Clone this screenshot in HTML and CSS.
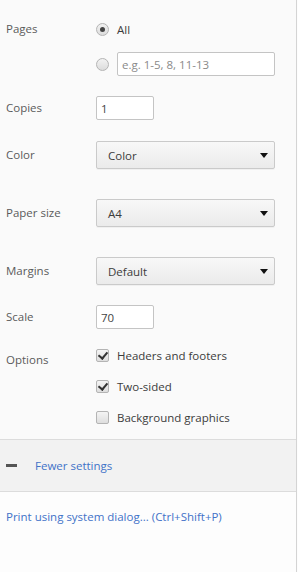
FILE: index.html
```html
<!DOCTYPE html>
<html lang="en">
<head>
  <meta charset="UTF-8">
  <title>Print settings</title>
  <link rel="stylesheet" href="styles.css">
</head>
<body>
  <div class="panel">
    <div class="settings">
      <div class="setting pages">
        <div class="label">Pages</div>
        <div class="controls">
          <label class="choice line"><span class="radio checked"></span>All</label>
          <label class="choice line"><span class="radio"></span><input class="text wide" type="text" placeholder="e.g. 1-5, 8, 11-13"></label>
        </div>
      </div>

      <div class="setting copies">
        <div class="label">Copies</div>
        <div class="controls"><input class="text short" type="text" value="1"></div>
      </div>

      <div class="setting color">
        <div class="label tall">Color</div>
        <div class="controls"><div class="select">Color<span class="arrow"></span></div></div>
      </div>

      <div class="setting paper">
        <div class="label tall">Paper size</div>
        <div class="controls"><div class="select">A4<span class="arrow"></span></div></div>
      </div>

      <div class="setting margins">
        <div class="label tall">Margins</div>
        <div class="controls"><div class="select">Default<span class="arrow"></span></div></div>
      </div>

      <div class="setting scale">
        <div class="label">Scale</div>
        <div class="controls"><input class="text short" type="text" value="70"></div>
      </div>

      <div class="setting options">
        <div class="label opt">Options</div>
        <div class="controls checks">
          <label class="choice check-line"><span class="checkbox checked"></span>Headers and footers</label>
          <label class="choice check-line"><span class="checkbox checked"></span>Two-sided</label>
          <label class="choice check-line"><span class="checkbox"></span>Background graphics</label>
        </div>
      </div>
    </div>

    <div class="more">
      <span class="minus"></span>
      <a class="link" href="#">Fewer settings</a>
    </div>

    <div class="system">
      <a class="link" href="#">Print using system dialog... (Ctrl+Shift+P)</a>
    </div>
  </div>
</body>
</html>
```

FILE: styles.css
```css
* { box-sizing: border-box; }
html, body { margin: 0; height: 100%; }
body { font-family: "Open Sans", "Noto Sans", sans-serif; font-size: 11.5px; color: #444; background: #fdfdfd; }

.panel { width: 297px; min-height: 100%; background: #fdfdfd; border-right: 1px solid #d4d4d4; }
.settings { background: #fafafa; padding: 17px 0 12px 6px; border-bottom: 1px solid #dcdcdc; }

.setting { display: grid; grid-template-columns: 90px 179px; align-items: start; }
.label { height: 24px; line-height: 24px; color: #5a5a5a; }
.label.tall { height: 28px; line-height: 28px; }
.label.opt { margin-top: 3px; }
.controls { display: flex; flex-direction: column; gap: 11px; }

.copies { margin-top: 20px; }
.color { margin-top: 21px; }
.paper, .margins { margin-top: 30px; }
.scale { margin-top: 20px; }
.options { margin-top: 16px; }

.choice { display: flex; align-items: center; gap: 8px; color: #3c3c3c; }
.line { height: 24px; }
.checks { gap: 11px; }
.check-line { height: 20px; }

.radio { width: 13px; height: 13px; border-radius: 50%; border: 1px solid #b4b4b4; background: linear-gradient(#f2f2f2, #dcdcdc); flex: none; position: relative; }
.radio.checked::after { content: ""; position: absolute; left: 3px; top: 3px; width: 5px; height: 5px; border-radius: 50%; background: #444; }

.checkbox { width: 13px; height: 13px; border: 1px solid #b4b4b4; border-radius: 2px; background: linear-gradient(#f4f4f4, #dedede); flex: none; position: relative; }
.checkbox.checked::after { content: ""; position: absolute; left: 3px; top: 0px; width: 4px; height: 7px; border: solid #333; border-width: 0 2px 2px 0; transform: rotate(40deg); }

.text { height: 24px; border: 1px solid #c4c4c4; border-radius: 2px; background: #fff; font: inherit; color: #444; padding: 0 4px; outline: none; }
.text::placeholder { color: #8a8a8a; }
.text.short { width: 58px; }
.text.wide { width: 158px; }

.select { height: 28px; width: 179px; border: 1px solid #cacaca; border-radius: 2px; background: linear-gradient(#f8f8f8, #ebebeb); box-shadow: 0 1px 0 rgba(0,0,0,0.04); display: flex; align-items: center; justify-content: space-between; padding: 0 6px 0 11px; color: #3c3c3c; }
.arrow { width: 0; height: 0; border-left: 4px solid transparent; border-right: 4px solid transparent; border-top: 5px solid #111; }

.more { height: 52px; background: #f2f2f2; border-bottom: 1px solid #dcdcdc; display: flex; align-items: center; padding-left: 6px; }
.minus { width: 11px; height: 3px; background: #555; margin-right: 18px; }

.link { color: #4272c8; text-decoration: none; }

.system { padding: 16px 6px; line-height: 18px; }
```
